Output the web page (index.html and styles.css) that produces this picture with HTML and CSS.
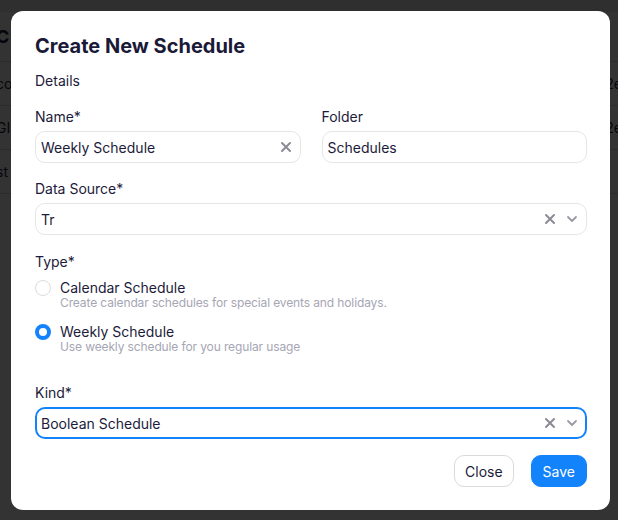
FILE: index.html
```html
<!DOCTYPE html>
<html lang="en">
<head>
  <meta charset="UTF-8">
  <meta name="viewport" content="width=device-width, initial-scale=1.0">
  <title>Schedules</title>
  <link rel="stylesheet" href="styles.css">
</head>
<body>
  <!-- Page behind the dialog -->
  <div class="page">
    <div class="topbar"></div>
    <div class="table">
      <div class="row head"><span>C</span><span></span></div>
      <div class="row"><span>co</span><span>2e</span></div>
      <div class="row"><span>GIS</span><span>2e</span></div>
      <div class="row"><span>st</span><span></span></div>
    </div>
  </div>

  <div class="overlay">
    <div class="modal">
      <h2 class="modal-title">Create New Schedule</h2>
      <p class="section">Details</p>

      <div class="grid-2">
        <div class="field">
          <label>Name*</label>
          <div class="input">
            <span class="value">Weekly Schedule</span>
            <svg class="icon clear" viewBox="0 0 12 12"><path d="M2 2l8 8M10 2l-8 8"/></svg>
          </div>
        </div>
        <div class="field">
          <label>Folder</label>
          <div class="input">
            <span class="value">Schedules</span>
          </div>
        </div>
      </div>

      <div class="field">
        <label>Data Source*</label>
        <div class="input">
          <span class="value">Tr</span>
          <svg class="icon clear" viewBox="0 0 12 12"><path d="M2 2l8 8M10 2l-8 8"/></svg>
          <svg class="icon chevron" viewBox="0 0 12 12"><path d="M2 4l4 4 4-4"/></svg>
        </div>
      </div>

      <div class="field type">
        <label>Type*</label>
        <div class="radio">
          <span class="dot"></span>
          <div>
            <div class="radio-title">Calendar Schedule</div>
            <div class="radio-desc">Create calendar schedules for special events and holidays.</div>
          </div>
        </div>
        <div class="radio checked">
          <span class="dot"></span>
          <div>
            <div class="radio-title">Weekly Schedule</div>
            <div class="radio-desc">Use weekly schedule for you regular usage</div>
          </div>
        </div>
      </div>

      <div class="field kind">
        <label>Kind*</label>
        <div class="input focused">
          <span class="value">Boolean Schedule</span>
          <svg class="icon clear" viewBox="0 0 12 12"><path d="M2 2l8 8M10 2l-8 8"/></svg>
          <svg class="icon chevron" viewBox="0 0 12 12"><path d="M2 4l4 4 4-4"/></svg>
        </div>
      </div>

      <div class="actions">
        <button class="btn">Close</button>
        <button class="btn primary">Save</button>
      </div>
    </div>
  </div>
</body>
</html>
```

FILE: styles.css
```css
* {
  margin: 0;
  padding: 0;
  box-sizing: border-box;
}

body {
  font-family: 'Inter', 'Liberation Sans', sans-serif;
  background-color: #ffffff;
  color: #1c1b3a;
  overflow: hidden;
}

/* Background page */
.page {
  height: 520px;
}

.topbar {
  height: 12px;
  background-color: #ececec;
}

.row {
  display: flex;
  justify-content: space-between;
  align-items: center;
  height: 44px;
  border-bottom: 1px solid #d8d8d8;
  font-size: 14px;
  color: #1c1b3a;
}

.row.head {
  height: 50px;
  font-weight: 700;
  font-size: 18px;
}

.row span {
  margin-left: -4px;
}

.row span:last-child {
  margin-right: -4px;
}

/* Dim layer + dialog */
.overlay {
  position: fixed;
  top: 0;
  left: 0;
  right: 0;
  bottom: 0;
  background-color: rgba(0, 0, 0, 0.8);
  padding: 11px 8px 10px 11px;
}

.modal {
  width: 599px;
  height: 499px;
  background-color: #ffffff;
  border-radius: 12px;
  padding: 21px 23px 23px 24px;
  display: flex;
  flex-direction: column;
}

.modal-title {
  font-size: 20px;
  line-height: 28px;
  font-weight: 700;
  color: #1a1a38;
}

.section {
  font-size: 14px;
  line-height: 20px;
  margin-top: 11px;
}

.grid-2 {
  display: grid;
  grid-template-columns: 1fr 1fr;
  gap: 21px;
  margin-top: 16px;
}

.field {
  display: flex;
  flex-direction: column;
  gap: 4px;
  margin-top: 16px;
}

.grid-2 .field {
  margin-top: 0;
}

.field label {
  font-size: 14px;
  line-height: 20px;
  color: #1c1b3a;
}

.input {
  display: flex;
  align-items: center;
  height: 32px;
  border: 1px solid #e6e6e9;
  border-radius: 10px;
  padding: 0 8px 0 5px;
  gap: 10px;
}

.input .value {
  flex: 1;
  font-size: 14px;
  color: #1c1b3a;
}

.input.focused {
  border: 2px solid #1383fb;
  padding-left: 4px;
  padding-right: 7px;
}

.icon {
  width: 12px;
  height: 12px;
  fill: none;
  stroke: #8b8b96;
  stroke-linecap: round;
  stroke-linejoin: round;
}

.icon.clear {
  stroke-width: 2;
}

.icon.chevron {
  stroke-width: 1.8;
  stroke: #9a9aa4;
}

/* Radio options */
.field.type {
  margin-top: 17px;
  gap: 7px;
}

.radio {
  display: flex;
  gap: 9px;
}

.radio + .radio {
  margin-top: 6px;
}

.dot {
  width: 16px;
  height: 16px;
  border-radius: 50%;
  border: 1.5px solid #dcdcdf;
  margin-top: 1px;
  flex-shrink: 0;
}

.radio.checked .dot {
  border: 4.5px solid #1383fb;
}

.radio-title {
  font-size: 14px;
  line-height: 17px;
  color: #1c1b3a;
}

.radio-desc {
  font-size: 12px;
  line-height: 14px;
  letter-spacing: -0.12px;
  color: #a6a6b4;
}

.field.kind {
  margin-top: 29px;
}

/* Footer buttons */
.actions {
  display: flex;
  justify-content: flex-end;
  gap: 17px;
  margin-top: 16px;
}

.btn {
  font-family: inherit;
  font-size: 14px;
  height: 32px;
  padding: 0 10px;
  border-radius: 10px;
  border: 1px solid #d9d9de;
  background-color: #ffffff;
  color: #1c1b3a;
}

.btn.primary {
  background-color: #1383fb;
  border-color: #1383fb;
  color: #ffffff;
  padding: 0 11px;
}
```
